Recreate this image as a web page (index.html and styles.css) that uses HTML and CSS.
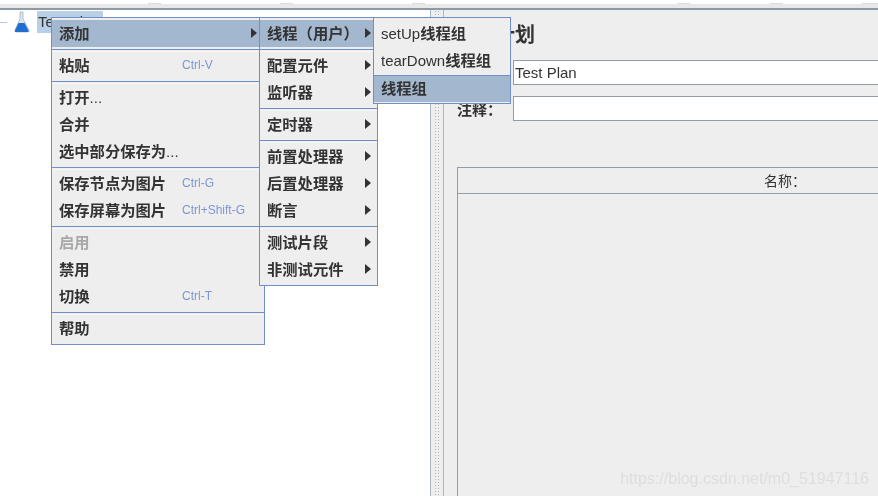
FILE: index.html
```html
<!DOCTYPE html>
<html lang="zh-CN">
<head>
  <meta charset="UTF-8">
  <title>JMeter</title>
  <link rel="stylesheet" href="styles.css">
</head>
<body>
  <div class="toolbar"></div>
  <div class="main">
    <div class="tree">
      <div class="tree-row">
        <span class="tree-line"></span>
        <svg class="flask" width="18" height="22" viewBox="0 0 18 22">
          <path d="M7 1h3v7l6 11c.5 1-.2 2-1 2H3c-1 0-1.500-1-1-2L7 8z" fill="#dfe6ee" stroke="#9aa6b4" stroke-width=".7"/>
          <path d="M5.500 12h6l4 7.500c.3.800 0 1.500-1 1.500H3c-1 0-1.300-.7-1-1.500z" fill="#1f6fd0"/>
        </svg>
        <span class="tree-label">Test Plan</span>
      </div>
    </div>
    <div class="splitter"><div class="dots"></div></div>
    <div class="panel">
      <div class="title">测试计划</div>
      <div class="field">
        <div class="field-label"></div>
        <div class="input">Test Plan</div>
      </div>
      <div class="field">
        <div class="field-label">注释：</div>
        <div class="input"></div>
      </div>
      <div class="table">
        <div class="table-head">名称：</div>
      </div>
      <div class="watermark">https://blog.csdn.net/m0_51947116</div>
    </div>
  </div>

  <div class="menu menu-main">
    <div class="item active">添加<span class="arrow"></span></div>
    <div class="sep"></div>
    <div class="item">粘贴<span class="key">Ctrl-V</span></div>
    <div class="sep"></div>
    <div class="item">打开<span class="latin">...</span></div>
    <div class="item">合并</div>
    <div class="item">选中部分保存为<span class="latin">...</span></div>
    <div class="sep"></div>
    <div class="item">保存节点为图片<span class="key">Ctrl-G</span></div>
    <div class="item">保存屏幕为图片<span class="key">Ctrl+Shift-G</span></div>
    <div class="sep"></div>
    <div class="item disabled">启用</div>
    <div class="item">禁用</div>
    <div class="item">切换<span class="key">Ctrl-T</span></div>
    <div class="sep"></div>
    <div class="item">帮助</div>
  </div>

  <div class="menu menu-add">
    <div class="item active">线程（用户）<span class="arrow"></span></div>
    <div class="sep"></div>
    <div class="item">配置元件<span class="arrow"></span></div>
    <div class="item">监听器<span class="arrow"></span></div>
    <div class="sep"></div>
    <div class="item">定时器<span class="arrow"></span></div>
    <div class="sep"></div>
    <div class="item">前置处理器<span class="arrow"></span></div>
    <div class="item">后置处理器<span class="arrow"></span></div>
    <div class="item">断言<span class="arrow"></span></div>
    <div class="sep"></div>
    <div class="item">测试片段<span class="arrow"></span></div>
    <div class="item">非测试元件<span class="arrow"></span></div>
  </div>

  <div class="menu menu-threads">
    <div class="item"><span class="latin">setUp</span>线程组</div>
    <div class="item"><span class="latin">tearDown</span>线程组</div>
    <div class="item active last">线程组</div>
  </div>
</body>
</html>
```

FILE: styles.css
```css
html, body {
  margin: 0;
  height: 100%;
}
body {
  position: relative;
  overflow: hidden;
  background: #fff;
  font-family: "Liberation Sans", "Noto Sans CJK SC", sans-serif;
  color: #333;
  filter: blur(.35px);
}
.toolbar {
  height: 4px;
  border-bottom: 4px solid #e8e8e8;
  /* the ends of the toolbar buttons, cut off at the top of the shot */
  background:
    linear-gradient(#ddd, #ddd) 148px 3px / 13px 1px no-repeat,
    linear-gradient(#ddd, #ddd) 280px 3px / 13px 1px no-repeat,
    linear-gradient(#ddd, #ddd) 412px 3px / 13px 1px no-repeat,
    linear-gradient(#ddd, #ddd) 677px 3px / 13px 1px no-repeat,
    linear-gradient(#ddd, #ddd) 770px 3px / 13px 1px no-repeat,
    linear-gradient(#ddd, #ddd) 862px 3px / 16px 1px no-repeat,
    #fff;
}
.main {
  display: flex;
  height: 488px;
  border-top: 2px solid #8c9aa8;
}
.tree {
  width: 430px;
  background: #fff;
  border-right: 1px solid #a9b6c6;
}
.tree-row {
  display: flex;
  align-items: center;
  height: 22px;
  margin-top: 1px;
}
.tree-line {
  width: 7px;
  height: 1px;
  margin-top: 1px;
  background: #b9c8dc;
}
.flask {
  margin-left: 6px;
}
.tree-label {
  margin-left: 6px;
  padding-left: 1px;
  box-sizing: border-box;
  width: 66px;
  line-height: 22px;
  font-size: 15px;
  white-space: nowrap;
  background: #b8cfe5;
}
.splitter {
  width: 12px;
  background: #eee;
  border-right: 1px solid #a9b6c6;
  display: flex;
  justify-content: center;
}
.dots {
  width: 6px;
  background-image: radial-gradient(#b4b4b4 40%, transparent 45%);
  background-size: 3px 3px;
}
.panel {
  position: relative;
  flex: 1;
  background: #eee;
  padding-left: 13px;
}
.title {
  margin-left: -2px;
  height: 50px;
  line-height: 50px;
  font-size: 20px;
  font-weight: bold;
  white-space: nowrap;
}
.field {
  display: flex;
  align-items: center;
  height: 25px;
  margin-bottom: 11px;
}
.field-label {
  width: 56px;
  font-size: 15px;
  font-weight: bold;
}
.input {
  flex: 1;
  height: 23px;
  line-height: 23px;
  padding-left: 1px;
  font-size: 15px;
  background: #fff;
  border: 1px solid #8f9dab;
  border-right: 0;
}
.table {
  margin-top: 46px;
  height: 340px;
  border-left: 1px solid #8f9dab;
  border-top: 1px solid #8f9dab;
}
.table-head {
  height: 24px;
  line-height: 24px;
  padding-top: 1px;
  padding-left: 306px;
  font-size: 14px;
  border-bottom: 1px solid #8f9dab;
}
.watermark {
  position: absolute;
  right: 9px;
  bottom: 10px;
  font-size: 16px;
  color: #dedede;
  white-space: nowrap;
}
.menu {
  position: absolute;
  top: 17px;
  box-sizing: border-box;
  padding: 2px 0;
  background: #eee;
  border: 1px solid #6f8fcb;
  font-size: 15.3px;
  font-weight: bold;
  white-space: nowrap;
}
.menu-main {
  left: 51px;
  width: 214px;
  height: 328px;
}
.menu-add {
  left: 259px;
  width: 119px;
  height: 269px;
}
.menu-threads {
  left: 373px;
  width: 138px;
  height: 87px;
}
.item {
  position: relative;
  height: 27px;
  line-height: 27px;
  padding-left: 7px;
}
.item.active {
  background: #a3b8ce;
}
.item.disabled {
  color: #a8a8a8;
}
.item.last {
  margin-top: 1px;
  box-sizing: border-box;
  line-height: 25px;
  border-top: 1px solid #6f8fcb;
}
.latin {
  font-size: 15px;
  font-weight: normal;
}
.sep {
  height: 3px;
  margin-top: 2px;
  box-sizing: border-box;
  border-top: 1px solid #6f8fcb;
  border-bottom: 1px solid #f6f6f6;
}
.key {
  position: absolute;
  left: 130px;
  font-size: 12px;
  font-weight: normal;
  color: #7d97d3;
}
.arrow {
  position: absolute;
  right: 6px;
  top: 8px;
  border-left: 6px solid #333;
  border-top: 5px solid transparent;
  border-bottom: 5px solid transparent;
}
.menu-main .arrow {
  right: 7px;
}
```
